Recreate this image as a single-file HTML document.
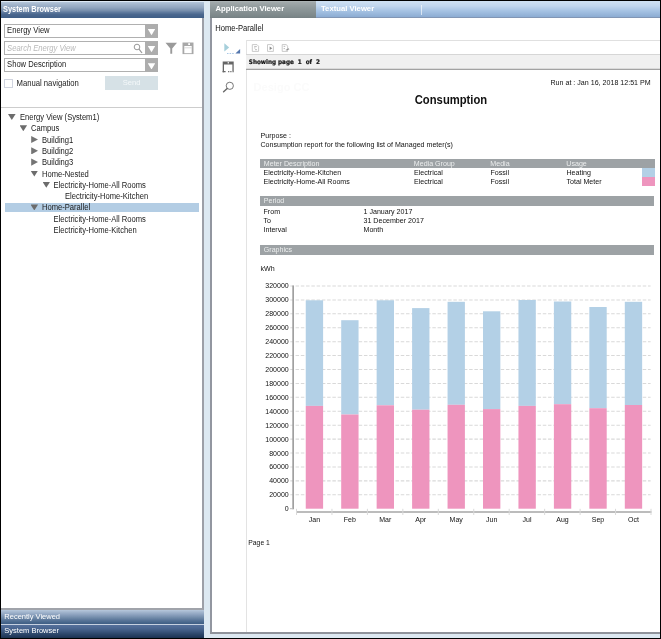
<!DOCTYPE html>
<html><head><meta charset="utf-8"><title>System Browser</title>
<style>
*{box-sizing:border-box;margin:0;padding:0}
html,body{width:661px;height:639px;overflow:hidden;background:#000}
body{position:relative;font-family:"Liberation Sans",sans-serif;font-size:7.6px;color:#222}
.abs{position:absolute}
#left,#right,.gs{will-change:transform}
#left{left:1px;top:1px;width:203px;height:637px;background:#fff}
#lhdr{left:0;top:0;width:203px;height:16.5px;background:linear-gradient(#dfeaf5 0px,#dfeaf5 0.9px,#b4c6da 1.1px,#a6b8ce 3px,#92a6bf 6.5px,#788fad 9.5px,#5e799d 11.5px,#4a678e 13.5px,#405f87 16.5px);color:#fff;font-weight:bold;font-size:7.4px;line-height:16.4px;padding-left:2px}
#lbody{left:0;top:16.5px;width:203px;height:592.5px;border-right:2px solid #9c9fa7;border-bottom:2px solid #a0a3aa;background:#fff}
.dd{left:3px;width:154px;height:13.4px;border:1px solid #b0b0b0;background:#fff;font-size:7.6px;line-height:11px;padding-left:2.1px;color:#222}
.dd .t{transform:translateY(-0.1px) scaleY(1.11)}
.dd .arr{position:absolute;right:-1px;top:-1px;width:13px;height:13.4px;background:#adadad}
.dd .arr:after{content:"";position:absolute;left:2.75px;top:4.85px;width:7.5px;height:6.3px;background:#fff;clip-path:polygon(0 0,100% 0,50% 100%)}
#send{left:104px;top:58.6px;width:53px;height:14.2px;background:#d6e1e6;color:#f4f8fa;font-size:7.6px;line-height:13px;text-align:center}
#cb{left:3px;top:61.5px;width:9.2px;height:9.2px;border:1px solid #d0d4df;background:#fff}
.row{left:0;height:11.3px;line-height:11.3px;font-size:7.6px;white-space:nowrap;color:#1a1a1a}
.row span{transform:scaleY(1.11);transform-origin:0 2.7px}
.t{display:inline-block;transform:scaleY(1.11);transform-origin:0 30%}
.tri-d{position:absolute;width:7.6px;height:6px;background:#6c6c6c;clip-path:polygon(0 0,100% 0,50% 100%);top:3px;margin-left:-0.5px}
.tri-r{position:absolute;width:6.8px;height:7.2px;background:#747474;clip-path:polygon(0 0,100% 50%,0 100%);top:2.3px;margin-left:-0.3px}
.bbar{left:0;width:203px;color:#fff;font-size:7.5px;padding-left:3.3px}
#strip{left:204px;top:1px;width:6px;height:637px;background:#dce8f1}
#right{left:210px;top:1px;width:450px;height:637px;background:#dce8f1}
#tabbar{left:0;top:0;width:450px;height:17.2px;background:linear-gradient(#cfe1f3 0px,#c1d6ee 5px,#a5c2e3 10px,#8dadd3 15.8px,#8398b7 16.3px,#7b8fad 17.2px)}
#tab1{left:0;top:0;width:106px;height:17.2px;background:linear-gradient(#b0b7b8 0px,#a0a8aa 1.5px,#8f999b 7px,#7a8587 16px,#727d80 17.2px);color:#fff;font-weight:bold;font-size:7.7px;line-height:16px;padding-left:5.5px}
#tab2{left:111px;top:0;height:17px;color:#fff;font-weight:bold;font-size:7.7px;line-height:16px}
#rbody{left:0;top:17.2px;width:450px;height:615.8px;background:#fff;border-left:0;border-bottom:2px solid #8f939b;background:linear-gradient(90deg,#9296a0 0,#9296a0 1.75px,#fff 1.75px)}
.rep{font-family:"Liberation Sans",sans-serif;font-size:7.1px;color:#111;white-space:nowrap;line-height:9px;margin-top:0.5px;transform:scaleY(1.11);transform-origin:0 1.8px}
.gbar{left:259.9px;width:394.2px;height:10px;background:#9da2a5;color:#eceeee;font-size:7.1px;line-height:7.6px;padding:2.2px 0 0 3.9px;white-space:nowrap}
</style></head><body>
<div id="left" class="abs">
 <div id="lhdr" class="abs"><span class="t">System Browser</span></div>
 <div id="lbody" class="abs">
  <div class="dd abs" style="top:6.7px"><span class="t">Energy View</span><span class="arr"></span></div>
  <div class="dd abs" style="top:23.7px;color:#b9b9b9;font-style:italic"><span class="t" style="transform:translateY(0.6px) scaleY(1.11)">Search Energy View</span><span class="arr"></span>
   <svg class="abs" style="left:128px;top:1px" width="11" height="11" viewBox="0 0 11 11"><circle cx="4" cy="4" r="2.8" fill="none" stroke="#999" stroke-width="1"/><path d="M6 6.2L9 10" stroke="#999" stroke-width="1.2"/></svg>
  </div>
  <div class="dd abs" style="top:40.8px"><span class="t">Show Description</span><span class="arr"></span></div>
  <svg class="abs" style="left:164px;top:24px" width="13" height="13" viewBox="0 0 13 13"><path d="M0.5 0.8H12L7.2 6.6V11.8H5.3V6.6Z" fill="#9a9a9a"/></svg>
  <svg class="abs" style="left:181.3px;top:24px" width="13" height="14" viewBox="0 0 13 14"><path d="M0.5 0.5H11.5V12.1H0.5Z" fill="#a8a8a8"/><path d="M2.3 4H9.7V11.2H2.3Z" fill="#fff"/><path d="M6.2 1.2h1.8v1.8h-1.8z" fill="#fff"/><path d="M2.3 5.8H9.7" stroke="#cfcfcf" stroke-width="0.8"/></svg>
  <div id="cb" class="abs"></div>
  <div class="abs" style="left:15.5px;top:61px;font-size:7.7px;line-height:10px;color:#222"><span class="t">Manual navigation</span></div>
  <div id="send" class="abs">Send</div>
  <div class="abs" style="left:0;top:89px;width:201px;height:1.3px;background:#cdcdcd"></div>
  <div class="row abs" style="top:93.5px"><i class="tri-d" style="left:7.5px"></i><span class="abs" style="left:19px">Energy View (System1)</span></div>
  <div class="row abs" style="top:104.8px"><i class="tri-d" style="left:19px"></i><span class="abs" style="left:30px">Campus</span></div>
  <div class="row abs" style="top:116.1px"><i class="tri-r" style="left:30.5px"></i><span class="abs" style="left:41px">Building1</span></div>
  <div class="row abs" style="top:127.4px"><i class="tri-r" style="left:30.5px"></i><span class="abs" style="left:41px">Building2</span></div>
  <div class="row abs" style="top:138.7px"><i class="tri-r" style="left:30.5px"></i><span class="abs" style="left:41px">Building3</span></div>
  <div class="row abs" style="top:150px"><i class="tri-d" style="left:30px"></i><span class="abs" style="left:41px">Home-Nested</span></div>
  <div class="row abs" style="top:161.3px"><i class="tri-d" style="left:42px"></i><span class="abs" style="left:52.5px">Electricity-Home-All Rooms</span></div>
  <div class="row abs" style="top:172.6px"><span class="abs" style="left:64px">Electricity-Home-Kitchen</span></div>
  <div class="row abs" style="top:183.9px;left:4px;width:193.5px;height:9px;background:#b3cde4;margin-top:1.2px"></div>
  <div class="row abs" style="top:183.9px"><i class="tri-d" style="left:30px"></i><span class="abs" style="left:41px">Home-Parallel</span></div>
  <div class="row abs" style="top:195.2px"><span class="abs" style="left:52.5px">Electricity-Home-All Rooms</span></div>
  <div class="row abs" style="top:206.5px"><span class="abs" style="left:52.5px">Electricity-Home-Kitchen</span></div>
 </div>
 <div class="bbar abs" style="top:609px;height:14.2px;line-height:13.2px;background:linear-gradient(#b6c8dc 0px,#a3b6ce 2px,#899fbc 5px,#728caa 7.5px,#5b779a 10px,#47668b 12.5px,#3f5e85 14px)">Recently Viewed</div>
 <div class="bbar abs" style="top:623px;height:14px;line-height:13px;background:linear-gradient(#c5d0e0 0px,#c5d0e0 0.9px,#55709b 1.2px,#4b6791 4px,#3e5981 7px,#2d476a 10px,#223a5b 12.5px,#1c3151 14px)">System Browser</div>
</div>
<div id="strip" class="abs"></div>
<div id="right" class="abs">
 <div id="tabbar" class="abs"></div>
 <div id="tab1" class="abs">Application Viewer</div>
 <div id="tab2" class="abs">Textual Viewer</div>
 <div class="abs" style="left:211.2px;top:3.6px;width:1.3px;height:10px;background:rgba(255,255,255,0.62)"></div>
 <div id="rbody" class="abs"></div>
</div>

<div id="rep" class="abs gs" style="left:0;top:0;width:661px;height:639px">
<div class="abs" style="left:215.2px;top:24.1px;font-size:7.6px;line-height:10px;color:#111"><span class="t">Home-Parallel</span></div>
<!-- viewer frame -->
<div class="abs" style="left:245.5px;top:40px;width:414.5px;height:592px;background:linear-gradient(90deg,#e3e3e3 0,#e3e3e3 1.4px,transparent 1.4px),linear-gradient(#e0e0e0 0,#e0e0e0 1.1px,#fff 1.1px)"></div>
<div class="abs" style="left:246.4px;top:53.7px;width:413.6px;height:16.3px;background:linear-gradient(#d6d6d6 0,#d6d6d6 1.2px,#f0f0f0 1.2px,#f0f0f0 14.3px,#c4c4c4 14.7px,#a2a2a2 15.5px,#a8a8a8 16.3px)"></div>
<div class="abs" style="left:248.8px;top:56.8px;font-family:'DejaVu Sans Condensed','DejaVu Sans','Liberation Sans',sans-serif;font-stretch:condensed;font-weight:bold;font-size:6.3px;line-height:9px;color:#111;white-space:pre;-webkit-text-stroke:0.2px #111">Showing page  1  of  2</div>
<!-- left tool icons -->
<svg class="abs" style="left:220px;top:40px" width="24" height="56" viewBox="0 0 24 56">
 <path d="M4.3 3.2L9.2 7.4L4.3 11.6Z" fill="#a6cfdb"/>
 <path d="M7 13.5h1.5M9.6 13.5h1.5M12.2 13.5h1.5" stroke="#a9c8e6" stroke-width="1"/>
 <path d="M20.1 8.9V13.5H15.4Z" fill="#5577ad"/>
 <path d="M2.7 21.5H13.7V30.9H12.4V24.5H4V32.2H2.7Z" fill="#666"/>
 <path d="M7.7 22.1h1.1v1.3h-1.1z" fill="#fff"/>
 <path d="M2.6 31.1h3v1.1h-3zM8.1 31.1h1.2v1.1h-1.2zM10.3 31.1h1.2v1.1h-1.2zM12.5 31.1h1.2v1.1h-1.2z" fill="#666"/>
 <circle cx="9.8" cy="45.8" r="3.6" fill="none" stroke="#707070" stroke-width="0.95"/>
 <path d="M7.2 48.5L3.6 51.7" stroke="#6a6a6a" stroke-width="1.5" stroke-linecap="round"/>
</svg>
<!-- viewer toolbar icons -->
<svg class="abs" style="left:250px;top:42px" width="44" height="12" viewBox="0 0 44 12">
 <g fill="none" stroke="#c4c4c4" stroke-width="0.9">
  <path d="M2.3 2.6H7L8.6 4.2V9.4H2.3Z"/>
  <path d="M17.5 2.6H22L23.4 4.2V9.4H17.5Z"/>
  <path d="M32.2 2.6H36.4L37.6 4.2V9.4H32.2Z"/>
 </g>
 <path d="M4.2 4.6h2.6M4.2 6h1.2M5 7.7h2" stroke="#aaa" stroke-width="0.8"/>
 <path d="M19.6 4.4L22.3 6.2L19.6 8Z" fill="#8a8a8a"/>
 <path d="M33.6 4.4h1.6M33.6 6.6h1.4" stroke="#aaa" stroke-width="0.8"/>
 <path d="M35.5 8.1L38.6 6.2L39.4 7.2L36.4 8.6Z" fill="#8e8e8e"/>
</svg>
<div class="abs" id="wm" style="left:253.5px;top:79.8px;font-weight:bold;font-size:11.1px;line-height:14px;color:#fbfbfb;white-space:nowrap">Desigo CC</div>
<div class="abs rep" style="left:550.5px;top:78.5px;width:100px;text-align:right">Run at : Jan 16, 2018 12:51 PM</div>
<div class="abs" style="left:351px;top:92.8px;width:200px;text-align:center;font-weight:bold;font-size:11.25px;line-height:14px;color:#111;transform:scaleY(1.07)">Consumption</div>
<div class="abs rep" style="left:260.5px;top:131px">Purpose :</div>
<div class="abs rep" style="left:260.5px;top:140.2px">Consumption report for the following list of Managed meter(s)</div>
<div class="abs gbar" style="top:159px;width:395px;height:9px"><span class="t">Meter Description</span><span class="abs t" style="left:153.9px">Media Group</span><span class="abs t" style="left:230.4px">Media</span><span class="abs t" style="left:306.4px">Usage</span></div>
<div class="abs rep" style="left:263.5px;top:168.8px">Electricity-Home-Kitchen</div>
<div class="abs rep" style="left:414px;top:168.8px">Electrical</div>
<div class="abs rep" style="left:490.5px;top:168.8px">Fossil</div>
<div class="abs rep" style="left:566.5px;top:168.8px">Heating</div>
<div class="abs rep" style="left:263.5px;top:177.9px">Electricity-Home-All Rooms</div>
<div class="abs rep" style="left:414px;top:177.9px">Electrical</div>
<div class="abs rep" style="left:490.5px;top:177.9px">Fossil</div>
<div class="abs rep" style="left:566.5px;top:177.9px">Total Meter</div>
<div class="abs" style="left:642.1px;top:168px;width:12.8px;height:9.2px;background:#b3d0e6"></div>
<div class="abs" style="left:642.1px;top:177.2px;width:12.8px;height:9.3px;background:#ee95be"></div>
<div class="abs gbar" style="top:196.1px;padding-top:2.3px"><span class="t">Period</span></div>
<div class="abs rep" style="left:263.5px;top:207.6px">From</div>
<div class="abs rep" style="left:363.5px;top:207.6px">1 January 2017</div>
<div class="abs rep" style="left:263.5px;top:216.6px">To</div>
<div class="abs rep" style="left:363.5px;top:216.6px">31 December 2017</div>
<div class="abs rep" style="left:263.5px;top:225.6px">Interval</div>
<div class="abs rep" style="left:363.5px;top:225.6px">Month</div>
<div class="abs gbar" style="top:245px"><span class="t">Graphics</span></div>
<div class="abs rep" style="left:260.5px;top:264.8px">kWh</div>
<div class="abs rep" style="left:248.3px;top:536.7px;font-size:6.8px">Page 1</div>
<svg class="abs" style="left:0;top:0" width="661" height="639" viewBox="0 0 661 639" font-family="Liberation Sans, sans-serif" font-size="7px" fill="#111">
<text x="288.7" y="511.20" text-anchor="end">0</text>
<line x1="290.3" x2="650.6" y1="494.78" y2="494.78" stroke="#d9d9d9" stroke-width="1.05" stroke-dasharray="3.5 1.76"/>
<text x="288.7" y="497.28" text-anchor="end">20000</text>
<line x1="290.3" x2="650.6" y1="480.86" y2="480.86" stroke="#d9d9d9" stroke-width="1.05" stroke-dasharray="3.5 1.76"/>
<text x="288.7" y="483.36" text-anchor="end">40000</text>
<line x1="290.3" x2="650.6" y1="466.94" y2="466.94" stroke="#d9d9d9" stroke-width="1.05" stroke-dasharray="3.5 1.76"/>
<text x="288.7" y="469.44" text-anchor="end">60000</text>
<line x1="290.3" x2="650.6" y1="453.02" y2="453.02" stroke="#d9d9d9" stroke-width="1.05" stroke-dasharray="3.5 1.76"/>
<text x="288.7" y="455.52" text-anchor="end">80000</text>
<line x1="290.3" x2="650.6" y1="439.10" y2="439.10" stroke="#d9d9d9" stroke-width="1.05" stroke-dasharray="3.5 1.76"/>
<text x="288.7" y="441.60" text-anchor="end">100000</text>
<line x1="290.3" x2="650.6" y1="425.18" y2="425.18" stroke="#d9d9d9" stroke-width="1.05" stroke-dasharray="3.5 1.76"/>
<text x="288.7" y="427.68" text-anchor="end">120000</text>
<line x1="290.3" x2="650.6" y1="411.26" y2="411.26" stroke="#d9d9d9" stroke-width="1.05" stroke-dasharray="3.5 1.76"/>
<text x="288.7" y="413.76" text-anchor="end">140000</text>
<line x1="290.3" x2="650.6" y1="397.34" y2="397.34" stroke="#d9d9d9" stroke-width="1.05" stroke-dasharray="3.5 1.76"/>
<text x="288.7" y="399.84" text-anchor="end">160000</text>
<line x1="290.3" x2="650.6" y1="383.42" y2="383.42" stroke="#d9d9d9" stroke-width="1.05" stroke-dasharray="3.5 1.76"/>
<text x="288.7" y="385.92" text-anchor="end">180000</text>
<line x1="290.3" x2="650.6" y1="369.50" y2="369.50" stroke="#d9d9d9" stroke-width="1.05" stroke-dasharray="3.5 1.76"/>
<text x="288.7" y="372.00" text-anchor="end">200000</text>
<line x1="290.3" x2="650.6" y1="355.58" y2="355.58" stroke="#d9d9d9" stroke-width="1.05" stroke-dasharray="3.5 1.76"/>
<text x="288.7" y="358.08" text-anchor="end">220000</text>
<line x1="290.3" x2="650.6" y1="341.66" y2="341.66" stroke="#d9d9d9" stroke-width="1.05" stroke-dasharray="3.5 1.76"/>
<text x="288.7" y="344.16" text-anchor="end">240000</text>
<line x1="290.3" x2="650.6" y1="327.74" y2="327.74" stroke="#d9d9d9" stroke-width="1.05" stroke-dasharray="3.5 1.76"/>
<text x="288.7" y="330.24" text-anchor="end">260000</text>
<line x1="290.3" x2="650.6" y1="313.82" y2="313.82" stroke="#d9d9d9" stroke-width="1.05" stroke-dasharray="3.5 1.76"/>
<text x="288.7" y="316.32" text-anchor="end">280000</text>
<line x1="290.3" x2="650.6" y1="299.90" y2="299.90" stroke="#d9d9d9" stroke-width="1.05" stroke-dasharray="3.5 1.76"/>
<text x="288.7" y="302.40" text-anchor="end">300000</text>
<line x1="290.3" x2="650.6" y1="285.98" y2="285.98" stroke="#d9d9d9" stroke-width="1.05" stroke-dasharray="3.5 1.76"/>
<text x="288.7" y="288.48" text-anchor="end">320000</text>
<rect x="305.75" y="300.30" width="17.35" height="105.60" fill="#b3d0e6"/>
<rect x="305.75" y="405.90" width="17.35" height="102.80" fill="#ee95be"/>
<rect x="341.20" y="320.20" width="17.35" height="94.30" fill="#b3d0e6"/>
<rect x="341.20" y="414.50" width="17.35" height="94.20" fill="#ee95be"/>
<rect x="376.65" y="300.30" width="17.35" height="105.00" fill="#b3d0e6"/>
<rect x="376.65" y="405.30" width="17.35" height="103.40" fill="#ee95be"/>
<rect x="412.10" y="308.10" width="17.35" height="101.60" fill="#b3d0e6"/>
<rect x="412.10" y="409.70" width="17.35" height="99.00" fill="#ee95be"/>
<rect x="447.55" y="301.80" width="17.35" height="103.00" fill="#b3d0e6"/>
<rect x="447.55" y="404.80" width="17.35" height="103.90" fill="#ee95be"/>
<rect x="483.00" y="311.30" width="17.35" height="97.80" fill="#b3d0e6"/>
<rect x="483.00" y="409.10" width="17.35" height="99.60" fill="#ee95be"/>
<rect x="518.45" y="300.00" width="17.35" height="105.90" fill="#b3d0e6"/>
<rect x="518.45" y="405.90" width="17.35" height="102.80" fill="#ee95be"/>
<rect x="553.90" y="301.50" width="17.35" height="102.70" fill="#b3d0e6"/>
<rect x="553.90" y="404.20" width="17.35" height="104.50" fill="#ee95be"/>
<rect x="589.35" y="307.00" width="17.35" height="101.20" fill="#b3d0e6"/>
<rect x="589.35" y="408.20" width="17.35" height="100.50" fill="#ee95be"/>
<rect x="624.80" y="301.80" width="17.35" height="103.20" fill="#b3d0e6"/>
<rect x="624.80" y="405.00" width="17.35" height="103.70" fill="#ee95be"/>
<line x1="293.15" x2="293.15" y1="285.5" y2="509.2" stroke="#a0a0a0" stroke-width="1.7"/>
<line x1="290" x2="293.1" y1="508.7" y2="508.7" stroke="#bcbcbc" stroke-width="1"/>
<line x1="296" x2="651.5" y1="512" y2="512" stroke="#a6a6a6" stroke-width="1.7"/>
<line x1="296.50" x2="296.50" y1="508.8" y2="515" stroke="#d9d9d9" stroke-width="1"/>
<line x1="331.95" x2="331.95" y1="508.8" y2="515" stroke="#d9d9d9" stroke-width="1"/>
<line x1="367.40" x2="367.40" y1="508.8" y2="515" stroke="#d9d9d9" stroke-width="1"/>
<line x1="402.85" x2="402.85" y1="508.8" y2="515" stroke="#d9d9d9" stroke-width="1"/>
<line x1="438.30" x2="438.30" y1="508.8" y2="515" stroke="#d9d9d9" stroke-width="1"/>
<line x1="473.75" x2="473.75" y1="508.8" y2="515" stroke="#d9d9d9" stroke-width="1"/>
<line x1="509.20" x2="509.20" y1="508.8" y2="515" stroke="#d9d9d9" stroke-width="1"/>
<line x1="544.65" x2="544.65" y1="508.8" y2="515" stroke="#d9d9d9" stroke-width="1"/>
<line x1="580.10" x2="580.10" y1="508.8" y2="515" stroke="#d9d9d9" stroke-width="1"/>
<line x1="615.55" x2="615.55" y1="508.8" y2="515" stroke="#d9d9d9" stroke-width="1"/>
<line x1="651.00" x2="651.00" y1="508.8" y2="515" stroke="#d9d9d9" stroke-width="1"/>
<text x="314.40" y="522" text-anchor="middle">Jan</text>
<text x="349.85" y="522" text-anchor="middle">Feb</text>
<text x="385.30" y="522" text-anchor="middle">Mar</text>
<text x="420.75" y="522" text-anchor="middle">Apr</text>
<text x="456.20" y="522" text-anchor="middle">May</text>
<text x="491.65" y="522" text-anchor="middle">Jun</text>
<text x="527.10" y="522" text-anchor="middle">Jul</text>
<text x="562.55" y="522" text-anchor="middle">Aug</text>
<text x="598.00" y="522" text-anchor="middle">Sep</text>
<text x="633.45" y="522" text-anchor="middle">Oct</text>
</svg>
</div>
</body></html>
